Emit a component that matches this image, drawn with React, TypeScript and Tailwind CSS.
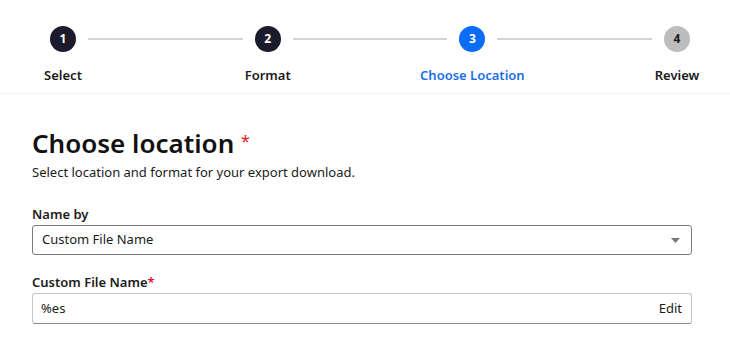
import React from "react";

const steps = [
  { n: 1, label: "Select", state: "done" },
  { n: 2, label: "Format", state: "done" },
  { n: 3, label: "Choose Location", state: "active" },
  { n: 4, label: "Review", state: "todo" },
];

function Step({ n, label, state }: { n: number; label: string; state: string }) {
  const circle =
    state === "active"
      ? "bg-[#0b6cf5] text-white"
      : state === "todo"
      ? "bg-[#bdbdbd] text-[#1b1b1b]"
      : "bg-[#1c1b2b] text-white";
  const text = state === "active" ? "text-[#1a6fe8]" : "text-[#1b1b1b]";
  return (
    <div className="flex w-[26px] shrink-0 flex-col items-center">
      <div className={`flex h-[26px] w-[26px] items-center justify-center rounded-full text-[12px] font-bold ${circle}`}>
        {n}
      </div>
      <div className={`mt-[13px] whitespace-nowrap text-[13px] font-semibold leading-[20px] ${text}`}>{label}</div>
    </div>
  );
}

export default function App() {
  return (
    <div className="h-[346px] w-[730px] overflow-hidden bg-white text-[#1b1b1b]" style={{ fontFamily: '"Noto Sans", "Open Sans", sans-serif' }}>
      <div className="border-b border-[#f3f3f3] pb-[8px] pl-[50px] pr-[40px] pt-[26px]">
        <div className="flex items-start">
          {steps.map((s, i) => (
            <React.Fragment key={s.n}>
              <Step {...s} />
              {i < steps.length - 1 && <div className="mx-3 mt-[12px] h-[2px] flex-1 bg-[#d4d4d4]" />}
            </React.Fragment>
          ))}
        </div>
      </div>

      <div className="pl-[32px] pr-[38px]">
        <h1 className="mt-[34px] text-[26px] font-semibold leading-[30px] text-[#111]">
          Choose location <span className="relative -top-[6px] text-[16px] font-normal text-[#e81123]">*</span>
        </h1>
        <p className="mt-0 text-[13px] leading-[20px] text-[#1b1b1b]">Select location and format for your export download.</p>

        <label className="mt-[22px] block text-[13px] font-semibold leading-[20px]">Name by</label>
        <div className="mt-[1px] flex h-[30px] items-center justify-between rounded-[3px] border border-[#7a7a7a] pl-[9px] pr-[11px]">
          <span className="text-[13px]">Custom File Name</span>
          <svg width="9" height="5" viewBox="0 0 9 5">
            <path d="M0 0h9L4.5 5z" fill="#777" />
          </svg>
        </div>

        <label className="mt-[17px] block text-[13px] font-semibold leading-[20px]">
          Custom File Name<span className="text-[#e81123]">*</span>
        </label>
        <div className="mt-[1px] flex h-[31px] items-center justify-between rounded-[3px] border border-[#c4c4c4] border-b-[#8a8a8a] pl-[8px] pr-[9px]">
          <span className="text-[13px]">%es</span>
          <span className="text-[13px]">Edit</span>
        </div>

        <label className="mt-[17px] block text-[13px] font-semibold leading-[20px]">
          Location<span className="text-[#e81123]">*</span>
        </label>
      </div>
    </div>
  );
}
